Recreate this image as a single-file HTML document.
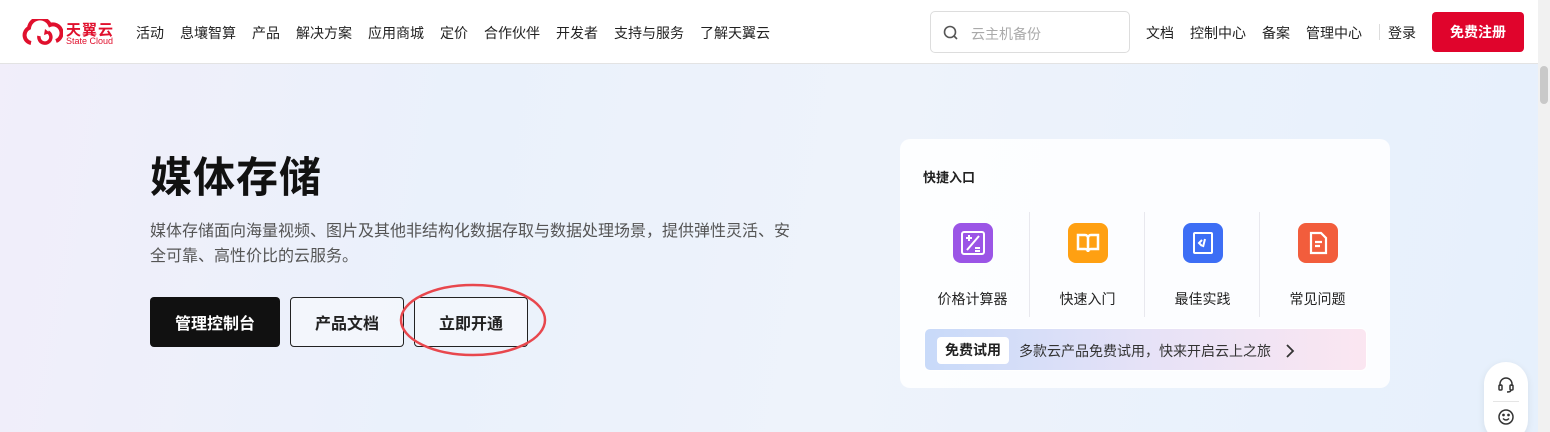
<!DOCTYPE html>
<html><head><meta charset="utf-8"><style>
*{margin:0;padding:0;box-sizing:border-box}
html{overflow:hidden;height:432px}
body{width:1550px;height:432px;overflow:hidden;font-family:"Liberation Sans","Noto Sans CJK SC",sans-serif;color:#222;background:linear-gradient(100deg,#f1eefa 0%,#eaf1fb 30%,#eef3fb 55%,#e6f0fc 100%);position:relative}
.hdr{position:absolute;left:0;top:0;width:1538px;height:64px;background:#fff;border-bottom:1px solid #e3e3e3}
.nav{position:absolute;top:23px;font-size:14px;color:#222;white-space:nowrap}
.nav span{margin-right:16px}
.sb{position:absolute;right:0;top:0;width:12px;height:432px;background:#f1f1f1}
.sb div{position:absolute;left:2px;top:66px;width:8px;height:38px;background:#c9c9c9;border-radius:4px}
.btn{position:absolute;top:297px;height:50px;border-radius:4px;font-size:16px;font-weight:bold;display:flex;align-items:center;justify-content:center}
.card{position:absolute;left:900px;top:139px;width:490px;height:249px;background:rgba(255,255,255,.85);border-radius:10px}
.it{position:absolute;top:84px;width:115px;text-align:center;font-size:14px;color:#222}
.ic{width:40px;height:40px;border-radius:8px;margin:0 auto 26px;display:flex;align-items:center;justify-content:center}
.sep{position:absolute;top:73px;width:1px;height:105px;background:#e8e8ee}
</style></head><body>
<div class="hdr">
 <svg style="position:absolute;left:21px;top:19px" width="42" height="26" viewBox="0 0 42 26"><path d="M10 24 A8 8 0 0 1 8 9 A11 11 0 0 1 29 6 A8 8 0 0 1 35 22" fill="none" stroke="#e0102d" stroke-width="4"/><path d="M18 17 A6 6 0 1 0 27 13" fill="none" stroke="#e0102d" stroke-width="3.5"/><path d="M24 10 L29 14 L23 16Z" fill="#e0102d"/></svg>
 <div style="position:absolute;left:66px;top:19px;font-size:15px;font-weight:bold;color:#e0102d;letter-spacing:1px">天翼云</div>
 <div style="position:absolute;left:66px;top:36px;font-size:9px;color:#e0102d">State Cloud</div>
 <div class="nav" style="left:136px"><span>活动</span><span>息壤智算</span><span>产品</span><span>解决方案</span><span>应用商城</span><span>定价</span><span>合作伙伴</span><span>开发者</span><span>支持与服务</span><span>了解天翼云</span></div>
 <div style="position:absolute;left:930px;top:11px;width:200px;height:42px;border:1px solid #ddd;border-radius:5px"></div>
 <svg style="position:absolute;left:943px;top:25px" width="16" height="16" viewBox="0 0 16 16"><circle cx="7" cy="7" r="5.5" fill="none" stroke="#555" stroke-width="1.6"/><path d="M11 11L14 14" stroke="#555" stroke-width="1.6"/></svg>
 <div style="position:absolute;left:971px;top:24px;font-size:14px;color:#aaa">云主机备份</div>
 <div class="nav" style="left:1146px"><span>文档</span><span>控制中心</span><span>备案</span><span>管理中心</span></div>
 <div style="position:absolute;left:1379px;top:24px;width:1px;height:16px;background:#ddd"></div>
 <div class="nav" style="left:1388px">登录</div>
 <div style="position:absolute;left:1432px;top:12px;width:92px;height:40px;background:#e0042c;border-radius:4px;color:#fff;font-size:14px;font-weight:bold;text-align:center;line-height:40px">免费注册</div>
</div>
<div class="sb"><div></div></div>
<div style="position:absolute;left:150px;top:144px;font-size:42px;font-weight:bold;color:#111;letter-spacing:1px">媒体存储</div>
<div style="position:absolute;left:150px;top:219px;width:650px;font-size:16px;line-height:25px;color:#555">媒体存储面向海量视频、图片及其他非结构化数据存取与数据处理场景，提供弹性灵活、安全可靠、高性价比的云服务。</div>
<div class="btn" style="left:150px;width:130px;background:#111;color:#fff">管理控制台</div>
<div class="btn" style="left:290px;width:114px;border:1px solid #222;background:rgba(255,255,255,.4)">产品文档</div>
<div class="btn" style="left:414px;width:114px;border:1px solid #222;background:rgba(255,255,255,.4)">立即开通</div>
<svg style="position:absolute;left:398px;top:282px" width="150" height="76"><ellipse cx="75" cy="38" rx="72" ry="35" fill="none" stroke="#e8474d" stroke-width="2.5"/></svg>
<div class="card">
 <div style="position:absolute;left:23px;top:28px;font-size:13px;font-weight:bold">快捷入口</div>
 <div class="sep" style="left:129px"></div><div class="sep" style="left:244px"></div><div class="sep" style="left:359px"></div>
 <div class="it" style="left:15px"><div class="ic" style="background:#9b55e6"><svg width="26" height="26" viewBox="0 0 26 26" fill="none" stroke="#fff" stroke-width="2"><rect x="2" y="2" width="22" height="22" rx="2"/><path d="M6 8h6M9 5v6M7 20L19 6M15 18h5M15 21h5"/></svg></div>价格计算器</div>
 <div class="it" style="left:130px"><div class="ic" style="background:#ffa012"><svg width="26" height="26" viewBox="0 0 26 26" fill="none" stroke="#fff" stroke-width="2.5"><path d="M3 5h7a3 3 0 0 1 3 3v14a3 3 0 0 0-3-3H3zM23 5h-7a3 3 0 0 0-3 3v14a3 3 0 0 1 3-3h7z"/></svg></div>快速入门</div>
 <div class="it" style="left:245px"><div class="ic" style="background:#3d6ef5"><svg width="26" height="26" viewBox="0 0 26 26" fill="none" stroke="#fff" stroke-width="2"><rect x="4" y="3" width="18" height="20" rx="1"/><path d="M12 10l-3 3 3 3M15 9l-2 8"/></svg></div>最佳实践</div>
 <div class="it" style="left:360px"><div class="ic" style="background:#f25d3c"><svg width="26" height="26" viewBox="0 0 26 26" fill="none" stroke="#fff" stroke-width="2.2"><path d="M6 3h10l5 5v15H6z"/><path d="M10 12h7M10 16h5"/></svg></div>常见问题</div>
 <div style="position:absolute;left:24px;top:189px;width:443px;height:43px;border-radius:6px;background:linear-gradient(90deg,#c8daf9,#e6e2f7 50%,#fbe6f1);border:1px solid #fff">
  <div style="position:absolute;left:12px;top:8px;width:72px;height:27px;background:#fff;border-radius:4px;font-size:14px;font-weight:bold;text-align:center;line-height:27px">免费试用</div>
  <div style="position:absolute;left:94px;top:12px;font-size:14px;color:#333">多款云产品免费试用，快来开启云上之旅</div>
  <svg style="position:absolute;left:360px;top:14px" width="10" height="16"><path d="M2 2l6 6-6 6" fill="none" stroke="#333" stroke-width="1.8"/></svg>
 </div>
</div>
<div style="position:absolute;left:1484px;top:362px;width:44px;height:80px;background:#fff;border-radius:22px;box-shadow:0 2px 8px rgba(0,0,0,.08)">
 <svg style="position:absolute;left:13px;top:13px" width="18" height="18" viewBox="0 0 18 18" fill="none" stroke="#333" stroke-width="1.5"><path d="M3 11V9a6 6 0 0 1 12 0v2"/><rect x="2" y="10" width="3" height="5" rx="1"/><rect x="13" y="10" width="3" height="5" rx="1"/><path d="M14 15q0 2-4 2"/></svg>
 <div style="position:absolute;left:9px;top:39px;width:26px;height:1px;background:#e5e5e5"></div>
 <svg style="position:absolute;left:13px;top:46px" width="18" height="18" viewBox="0 0 18 18" fill="none" stroke="#333" stroke-width="1.5"><circle cx="9" cy="9" r="7"/><path d="M6 10.5q3 3 6 0"/><circle cx="6.5" cy="7" r=".6" fill="#333"/><circle cx="11.5" cy="7" r=".6" fill="#333"/></svg>
</div>
</body></html>
